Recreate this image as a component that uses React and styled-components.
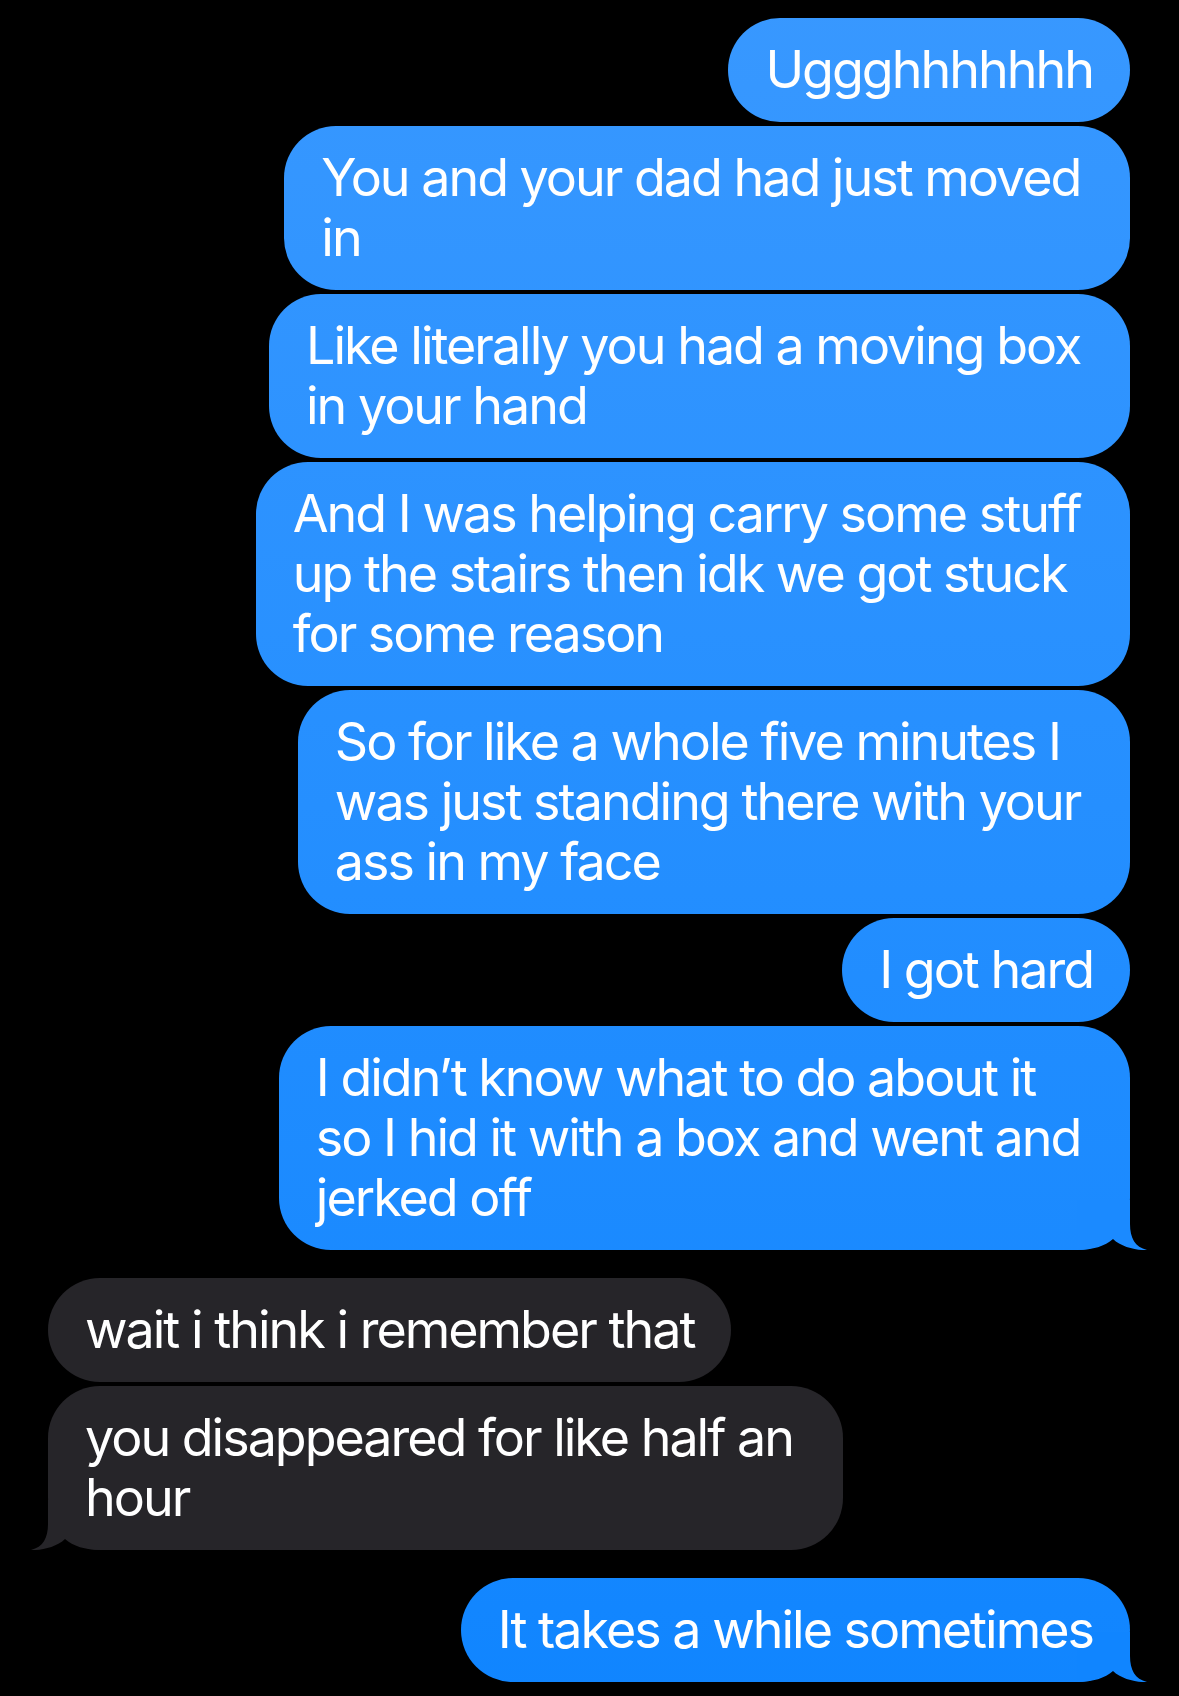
import React from "react";
import styled, { createGlobalStyle } from "styled-components";

const GlobalStyle = createGlobalStyle`
  html, body {
    margin: 0;
    padding: 0;
    background: #000;
  }
  body {
    font-family: Inter, "Noto Sans", "Liberation Sans", sans-serif;
    -webkit-font-smoothing: antialiased;
  }
`;

const TOP = [56, 152, 255];
const BOTTOM = [16, 133, 255];
const PAGE_H = 1696;

const blueAt = (y) => {
  const t = Math.min(1, Math.max(0, y / PAGE_H));
  const c = TOP.map((v, i) => Math.round(v + (BOTTOM[i] - v) * t));
  return `rgb(${c[0]}, ${c[1]}, ${c[2]})`;
};

const Thread = styled.main`
  display: flex;
  flex-direction: column;
  padding: 18px 49px 14px 48px;
  min-height: 1696px;
  box-sizing: border-box;
`;

const Group = styled.section`
  display: flex;
  flex-direction: column;
  align-items: ${(p) => (p.$sent ? "flex-end" : "flex-start")};
  gap: 4px;

  & + & {
    margin-top: 28px;
  }
`;

const Bubble = styled.div`
  position: relative;
  box-sizing: border-box;
  padding: 22px 37px;
  border-radius: 52px;
  color: #fff;
  font-size: 52px;
  line-height: 60px;
  letter-spacing: -2px;
  font-weight: 400;
  background: ${(p) =>
    p.$sent
      ? `linear-gradient(180deg, rgb(${TOP.join(",")}) 0px, rgb(${BOTTOM.join(",")}) ${PAGE_H}px)`
      : "#262529"};
  background-attachment: ${(p) => (p.$sent ? "fixed" : "scroll")};
`;

const Line = styled.span`
  position: relative;
  z-index: 1;
  display: block;
  white-space: pre;
`;

const TailSvg = styled.svg`
  position: absolute;
  z-index: 0;
  bottom: 0;
  width: 70px;
  height: 50px;
  ${(p) =>
    p.$left
      ? "left: -17px; transform: scaleX(-1);"
      : "right: -17px;"}
`;

const Tail = ({ left, color }) => (
  <TailSvg $left={left} viewBox="0 0 70 50">
    <path
      d="M0 0 H53 V24 C53 38 58 47 70 50 C60 50.6 44 47 36 39 C28 46 16 50 0 50 Z"
      fill={color}
    />
  </TailSvg>
);

const groups = [
  {
    sent: true,
    messages: [
      { lines: ["Uggghhhhhhh"] },
      { lines: ["You and your dad had just moved ", "in"] },
      { lines: ["Like literally you had a moving box ", "in your hand"] },
      {
        lines: [
          "And I was helping carry some stuff ",
          "up the stairs then idk we got stuck ",
          "for some reason",
        ],
      },
      {
        lines: [
          "So for like a whole five minutes I ",
          "was just standing there with your ",
          "ass in my face",
        ],
      },
      { lines: ["I got hard"] },
      {
        lines: [
          "I didn\u2019t know what to do about it ",
          "so I hid it with a box and went and ",
          "jerked off",
        ],
        tailY: 1250,
      },
    ],
  },
  {
    sent: false,
    messages: [
      { lines: ["wait i think i remember that"] },
      { lines: ["you disappeared for like half an ", "hour"], tailY: 1550 },
    ],
  },
  {
    sent: true,
    messages: [{ lines: ["It takes a while sometimes"], tailY: 1682 }],
  },
];

export default function App() {
  return (
    <>
      <GlobalStyle />
      <Thread>
        {groups.map((g, gi) => (
          <Group key={gi} $sent={g.sent}>
            {g.messages.map((m, mi) => (
              <Bubble key={mi} $sent={g.sent}>
                {m.tailY && (
                  <Tail
                    left={!g.sent}
                    color={g.sent ? blueAt(m.tailY) : "#262529"}
                  />
                )}
                {m.lines.map((l, li) => (
                  <Line key={li}>{l}</Line>
                ))}
              </Bubble>
            ))}
          </Group>
        ))}
      </Thread>
    </>
  );
}
